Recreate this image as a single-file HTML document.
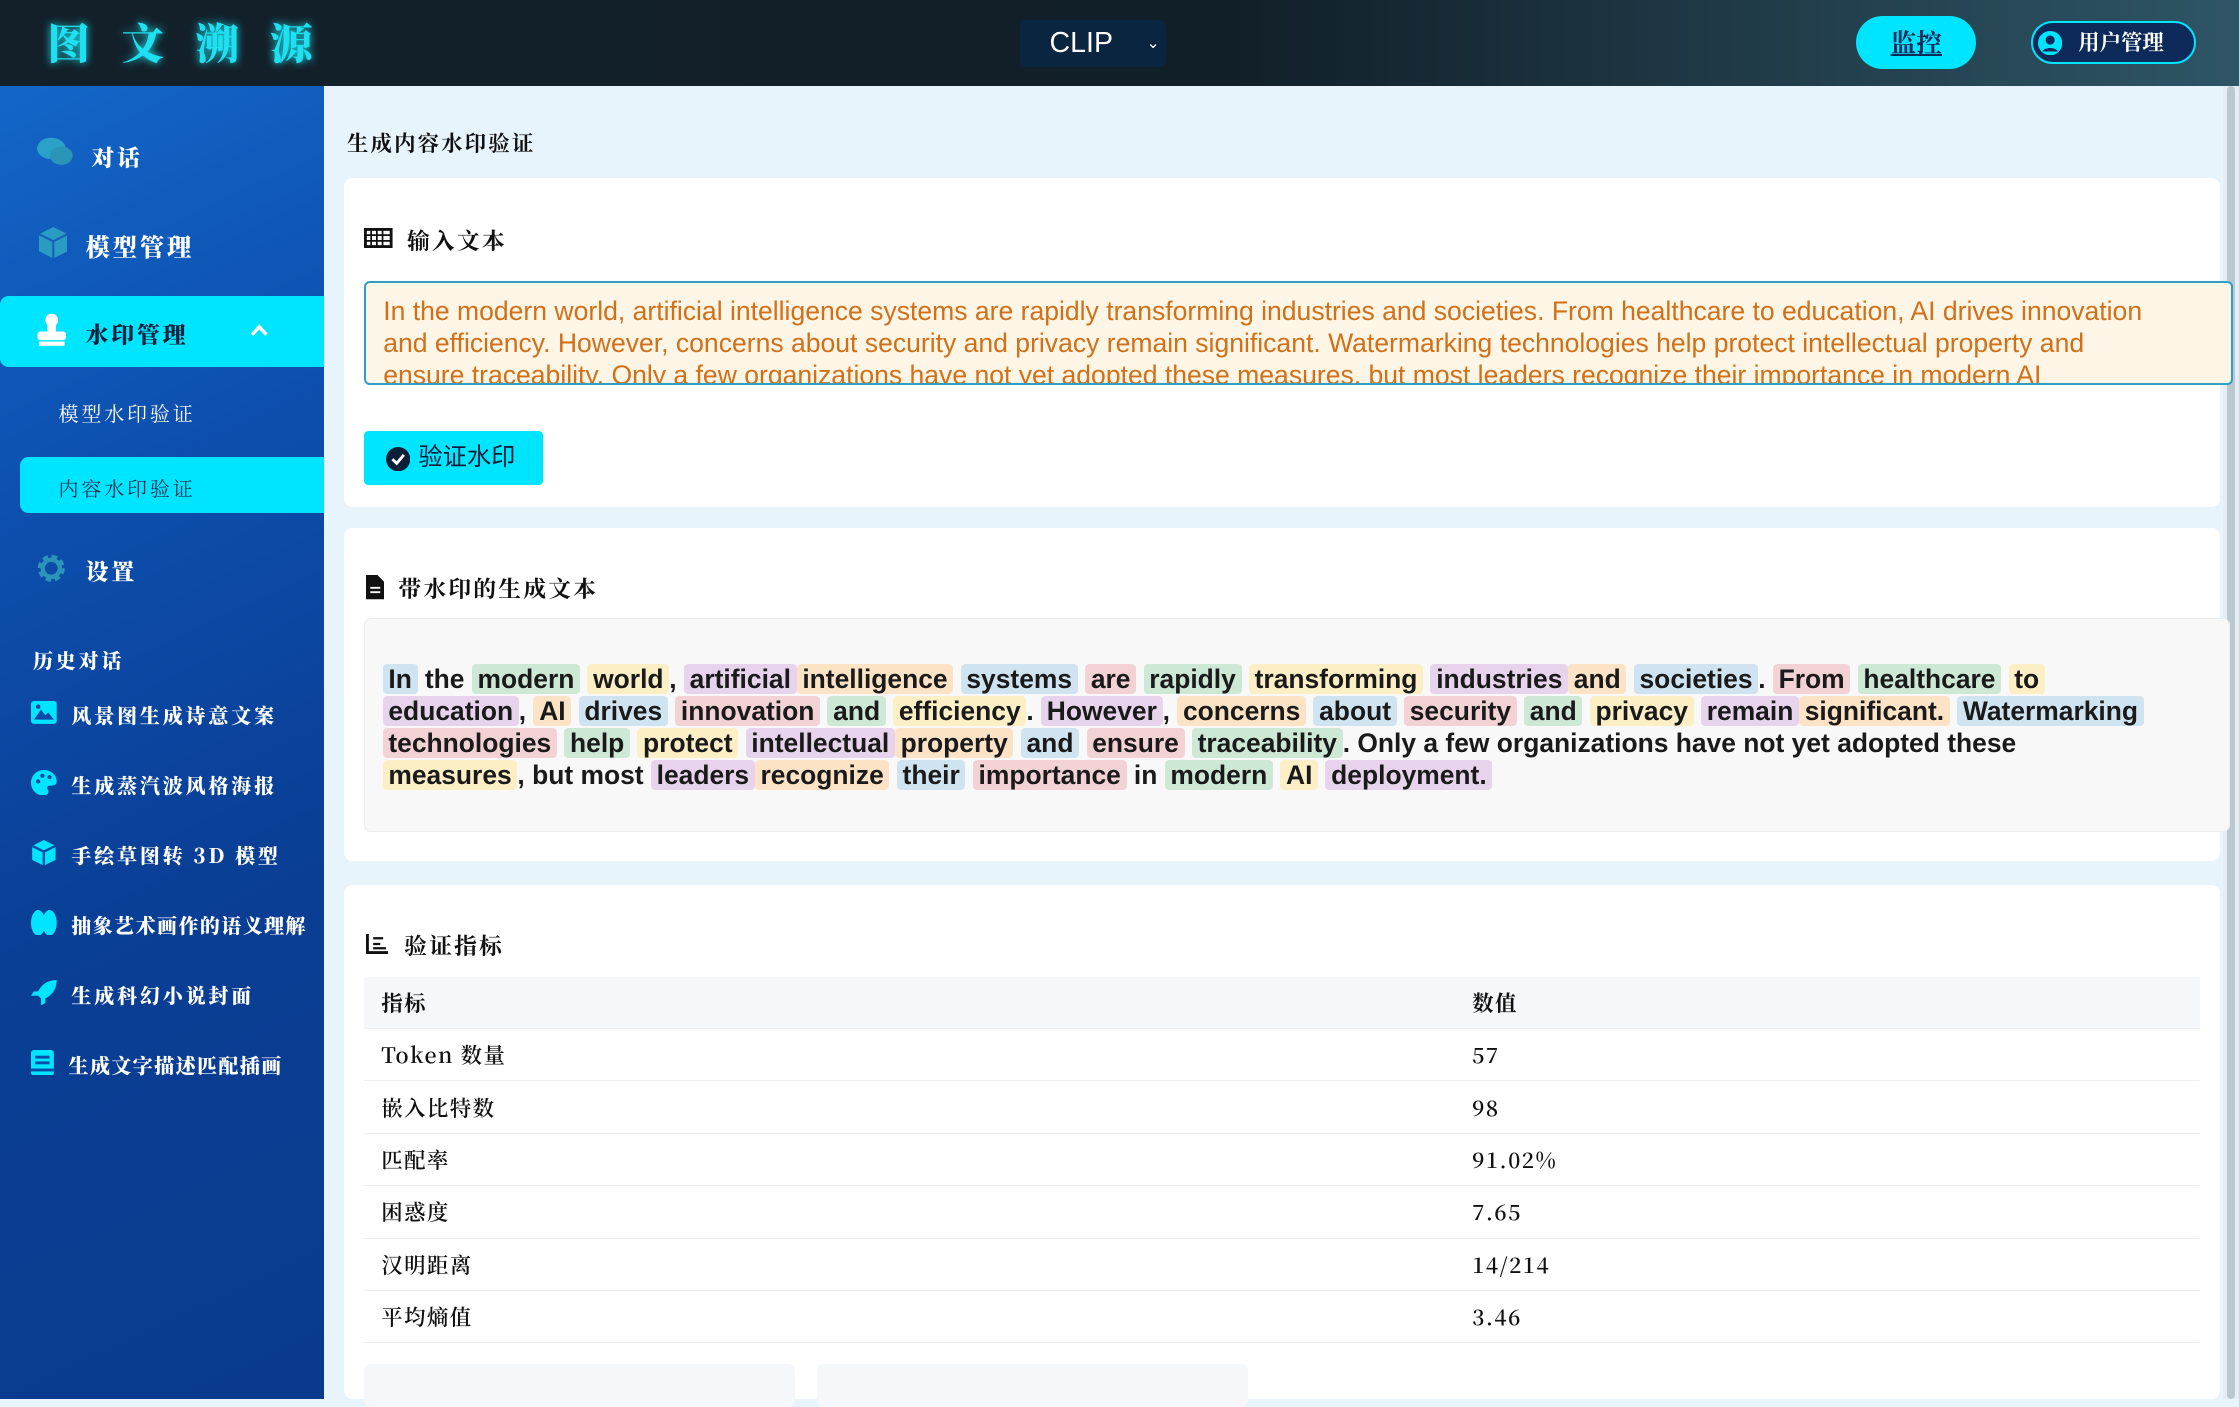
<!DOCTYPE html>
<html><head><meta charset="utf-8"><style>
html,body{margin:0;padding:0;background:#e8f4fc}
body{width:1568px;height:980px;zoom:1.42793;overflow:hidden;position:relative;background:#e8f4fc;font-family:"Liberation Sans","Noto Sans CJK SC",sans-serif}
.abs{position:absolute}
.hdr{left:0;top:0;width:1568px;height:60px;background:linear-gradient(90deg,#13202a 0%,#111f28 55%,#2e5566 100%)}
.logo{left:33px;top:8px;font-family:"Noto Serif CJK SC",serif;font-weight:900;font-size:30px;color:#1ee0f0;letter-spacing:22px;text-shadow:0 0 6px #1ee0f0}
.sel{left:714px;top:14px;width:103px;height:33px;background:#0a2540;border-radius:5px;color:#fff;font-size:20px;line-height:33px}
.mon{left:1300px;top:11px;width:84px;height:37px;border-radius:19px;background:#00e5ff;color:#0a2a5a;text-align:center;line-height:37px;font-size:18px;font-weight:bold;text-decoration:underline;font-family:"Noto Serif CJK SC",serif}
.usr{left:1422px;top:15px;width:113px;height:27px;border:2px solid #00e5ff;border-radius:15px;background:#0d2a5a;color:#fff;font-size:15px;line-height:27px;font-weight:bold;font-family:"Noto Serif CJK SC",serif}
.side{left:0;top:60px;width:227px;height:920px;background:linear-gradient(155deg,#1366c8 0%,#0d4fae 30%,#0a3f96 60%,#0b3a8c 100%)}
.ni{position:absolute;left:0;width:227px;color:#fff;font-family:"Noto Serif CJK SC",serif;font-weight:900;font-size:16px;letter-spacing:2px}
.card{background:#fff;border-radius:6px;position:absolute;left:241px;width:1314px}
.h{font-family:"Noto Serif CJK SC",serif;font-weight:700;font-size:16px;color:#111;letter-spacing:1.5px}
.tx{font-size:18.5px;font-weight:bold;color:#1a1a1a;line-height:22.6px;white-space:nowrap}
.tx span{border-radius:3px;padding:0 4px}
.b{background:#cfe3f1}.g{background:#cde8d5}.y{background:#fcefc6}.p{background:#e8d3ec}.o{background:#fde3c6}.r{background:#f3d2d5}
table{border-collapse:collapse;position:absolute;left:255px;top:684px;width:1286px;font-family:"Noto Serif CJK SC","Liberation Sans",serif;font-size:15px;font-weight:600;color:#111;letter-spacing:1px}
td{height:36px;border-bottom:1px solid #ebeef2;padding:0 12px}
tr:first-child td{background:#f5f7fa;font-weight:bold}
</style></head><body>
<div class="abs hdr"></div>
<div class="abs logo">图文溯源</div>
<div class="abs sel"><span style="position:absolute;left:21px">CLIP</span><span style="position:absolute;left:89px;font-size:11px">&#8964;</span></div>
<div class="abs mon">监控</div>
<div class="abs usr"><svg style="position:absolute;left:4px;top:5px" width="17" height="17" viewBox="0 0 16 16"><circle cx="8" cy="8" r="8" fill="#00e5ff"/><circle cx="8" cy="6" r="3" fill="#0d2a5a"/><path d="M3 13.5c1-3 9-3 10 0" fill="#0d2a5a"/></svg><span style="position:absolute;left:32px">用户管理</span></div>

<div class="abs side">
<div class="ni" style="top:36px"><svg style="position:absolute;left:26px;top:0" width="26" height="22" viewBox="0 0 26 22"><ellipse cx="10" cy="8" rx="10" ry="7.5" fill="#2aa2c8"/><ellipse cx="17" cy="13" rx="8" ry="6.5" fill="#2a95b8"/></svg><span style="position:absolute;left:64px;top:2px">对话</span></div>
<div class="ni" style="top:99px;font-size:17px"><svg style="position:absolute;left:27px;top:0" width="20" height="22" viewBox="0 0 20 22"><path d="M10 0L20 5V17L10 22L0 17V5Z" fill="#2a9cc4"/><path d="M10 10V22M0 5L10 10L20 5" stroke="#1560b8" stroke-width="1.5" fill="none"/></svg><span style="position:absolute;left:60px;top:1px">模型管理</span></div>
<div class="ni" style="top:147px;height:50px;background:#00e5ff;border-radius:6px 0 0 6px;color:#10203a"><svg style="position:absolute;left:25px;top:12px" width="22" height="23" viewBox="0 0 22 23"><circle cx="11" cy="5" r="4.5" fill="#fff"/><rect x="8" y="8" width="6" height="6" fill="#fff"/><rect x="1" y="13" width="20" height="6" rx="2" fill="#fff"/><rect x="2" y="20" width="18" height="3" fill="#fff"/></svg><span style="position:absolute;left:60px;top:15px">水印管理</span><svg style="position:absolute;left:175px;top:20px" width="13" height="9"><path d="M1.5 7.5L6.5 2L11.5 7.5" stroke="#fff" stroke-width="2.4" fill="none"/></svg></div>
<div class="ni" style="top:219px;font-size:14px;font-weight:400"><span style="position:absolute;left:41px">模型水印验证</span></div>
<div class="ni" style="top:260px;left:14px;width:213px;height:39px;background:#00e5ff;border-radius:6px 0 0 6px;color:#1a3050;font-size:14px;font-weight:400"><span style="position:absolute;left:27px;top:11px">内容水印验证</span></div>
<div class="ni" style="top:327px"><svg style="position:absolute;left:26px;top:1px" width="20" height="20" viewBox="0 0 20 20"><circle cx="10" cy="10" r="7" fill="none" stroke="#2a95b8" stroke-width="5" stroke-dasharray="3.3 2.2"/><circle cx="10" cy="10" r="6" fill="none" stroke="#2a95b8" stroke-width="3"/></svg><span style="position:absolute;left:60px;top:1px">设置</span></div>
<div class="ni" style="top:392px;font-size:14px"><span style="position:absolute;left:23px">历史对话</span></div>
<div class="ni" style="top:430px;font-size:14px"><svg style="position:absolute;left:22px;top:1px" width="18" height="16"><rect width="18" height="16" rx="2" fill="#00e5ff"/><path d="M2 13L7 6L10 10L12 8L16 13Z" fill="#0b4aa8"/><circle cx="5" cy="4" r="1.6" fill="#0b4aa8"/></svg><span style="position:absolute;left:50px">风景图生成诗意文案</span></div>
<div class="ni" style="top:479px;font-size:14px"><svg style="position:absolute;left:22px;top:0" width="18" height="18" viewBox="0 0 18 18"><path d="M9 0C14 0 18 3.5 18 8C18 11 15 11 13 11C11 11 11 13 12 14C13 16 11 18 9 18C4 18 0 14 0 9C0 4 4 0 9 0Z" fill="#00e5ff"/><circle cx="5" cy="8" r="1.5" fill="#0b4aa8"/><circle cx="8" cy="4" r="1.5" fill="#0b4aa8"/><circle cx="13" cy="5" r="1.5" fill="#0b4aa8"/></svg><span style="position:absolute;left:50px">生成蒸汽波风格海报</span></div>
<div class="ni" style="top:528px;font-size:14px"><svg style="position:absolute;left:22px;top:0" width="18" height="18" viewBox="0 0 20 22"><path d="M10 0L20 5V17L10 22L0 17V5Z" fill="#00e5ff"/><path d="M10 10V22M0 5L10 10L20 5" stroke="#0b4aa8" stroke-width="2" fill="none"/></svg><span style="position:absolute;left:50px">手绘草图转 3D 模型</span></div>
<div class="ni" style="top:577px;font-size:14px"><svg style="position:absolute;left:22px;top:0" width="18" height="18"><ellipse cx="5" cy="9" rx="5" ry="9" fill="#00e5ff"/><ellipse cx="13" cy="9" rx="5" ry="9" fill="#00e5ff"/></svg><span style="position:absolute;left:50px;letter-spacing:1px">抽象艺术画作的语义理解</span></div>
<div class="ni" style="top:626px;font-size:14px"><svg style="position:absolute;left:22px;top:0" width="18" height="18" viewBox="0 0 18 18"><path d="M18 0C11 0 7 4 5 8L2 8L0 11L5 11L7 13L7 18L10 16L10 13C14 11 18 7 18 0Z" fill="#00e5ff"/></svg><span style="position:absolute;left:50px">生成科幻小说封面</span></div>
<div class="ni" style="top:675px;font-size:14px"><svg style="position:absolute;left:22px;top:0" width="16" height="18"><rect width="16" height="18" rx="2" fill="#00e5ff"/><rect x="3" y="4" width="10" height="2" fill="#0b4aa8"/><rect x="3" y="8" width="10" height="2" fill="#0b4aa8"/><rect x="0" y="13" width="16" height="2" fill="#0b4aa8"/></svg><span style="position:absolute;left:48px;letter-spacing:1px">生成文字描述匹配插画</span></div>
</div>

<div class="abs h" style="left:243px;top:89px;font-size:15px">生成内容水印验证</div>
<div class="abs" style="left:1557px;top:60px;width:11px;height:920px;background:#e4eef4"><div style="margin:0 auto;width:6px;height:920px;background:#bcc8d0;border-radius:3px"></div></div>

<div class="card" style="top:125px;height:230px"></div>
<svg class="abs" style="left:255px;top:160px" width="20" height="14"><rect x="1" y="1" width="18" height="12" fill="none" stroke="#111" stroke-width="2"/><path d="M1 5H19M1 9H19M5 1V13M9 1V13M13 1V13" stroke="#111" stroke-width="1.2"/></svg>
<div class="abs h" style="left:285px;top:156px">输入文本</div>
<div class="abs" style="left:255px;top:197px;width:1306px;height:70px;background:#fdf5e6;border:2px solid #2f9fc5;border-radius:4px;overflow:hidden;box-sizing:content-box"><div style="padding:8px 12px;color:#d27018;font-size:18.6px;line-height:22.6px;white-space:nowrap">In the modern world, artificial intelligence systems are rapidly transforming industries and societies. From healthcare to education, AI drives innovation<br>and efficiency. However, concerns about security and privacy remain significant. Watermarking technologies help protect intellectual property and<br>ensure traceability. Only a few organizations have not yet adopted these measures, but most leaders recognize their importance in modern AI</div></div>
<div class="abs" style="left:255px;top:302px;width:125px;height:38px;background:#00e5ff;border-radius:3px;color:#0a1f3a;font-size:17px;line-height:38px"><svg style="position:absolute;left:15px;top:11px" width="17" height="17"><circle cx="8.5" cy="8.5" r="8.5" fill="#0a1f3a"/><path d="M4.5 8.5L7.5 11.5L12.5 5.5" stroke="#fff" stroke-width="2" fill="none"/></svg><span style="position:absolute;left:38px">验证水印</span></div>

<div class="card" style="top:370px;height:233px"></div>
<svg class="abs" style="left:256px;top:403px" width="13" height="17"><path d="M0 0H8L13 5V17H0Z" fill="#111"/><path d="M3 9H10M3 12H10" stroke="#fff" stroke-width="1.3"/></svg>
<div class="abs h" style="left:279px;top:400px">带水印的生成文本</div>
<div class="abs" style="left:255px;top:433px;width:1305px;height:148px;background:#f8f8f8;border:1px solid #ececec;border-radius:5px"></div>
<div class="abs tx" style="left:268px;top:464px">
<span class="b">In</span> the <span class="g">modern</span> <span class="y">world</span>, <span class="p">artificial</span><span class="o">intelligence</span> <span class="b">systems</span> <span class="r">are</span> <span class="g">rapidly</span> <span class="y">transforming</span> <span class="p">industries</span><span class="o">and</span> <span class="b">societies</span>. <span class="r">From</span> <span class="g">healthcare</span> <span class="y">to</span><br>
<span class="p">education</span>, <span class="o">AI</span> <span class="b">drives</span> <span class="r">innovation</span> <span class="g">and</span> <span class="y">efficiency</span>. <span class="p">However</span>, <span class="o">concerns</span> <span class="b">about</span> <span class="r">security</span> <span class="g">and</span> <span class="y">privacy</span> <span class="p">remain</span><span class="o">significant.</span> <span class="b">Watermarking</span><br>
<span class="r">technologies</span> <span class="g">help</span> <span class="y">protect</span> <span class="p">intellectual</span><span class="o">property</span> <span class="b">and</span> <span class="r">ensure</span> <span class="g">traceability</span>. Only a few organizations have not yet adopted these<br>
<span class="y">measures</span>, but most <span class="p">leaders</span><span class="o">recognize</span> <span class="b">their</span> <span class="r">importance</span> in <span class="g">modern</span> <span class="y">AI</span> <span class="p">deployment.</span>
</div>

<div class="card" style="top:620px;height:360px"></div>
<svg class="abs" style="left:256px;top:654px" width="16" height="14"><path d="M1 0V13H16" stroke="#111" stroke-width="2" fill="none"/><path d="M5 3H12M5 7H10M5 10H14" stroke="#111" stroke-width="1.6"/></svg>
<div class="abs h" style="left:283px;top:650px">验证指标</div>
<table>
<tr><td style="width:740px">指标</td><td>数值</td></tr>
<tr><td>Token 数量</td><td>57</td></tr>
<tr><td>嵌入比特数</td><td>98</td></tr>
<tr><td>匹配率</td><td>91.02%</td></tr>
<tr><td>困惑度</td><td>7.65</td></tr>
<tr><td>汉明距离</td><td>14/214</td></tr>
<tr><td>平均熵值</td><td>3.46</td></tr>
</table>
<div class="abs" style="left:255px;top:955px;width:302px;height:30px;background:#f5f7fa;border-radius:5px"></div>
<div class="abs" style="left:572px;top:955px;width:302px;height:30px;background:#f5f7fa;border-radius:5px"></div>
</body></html>
